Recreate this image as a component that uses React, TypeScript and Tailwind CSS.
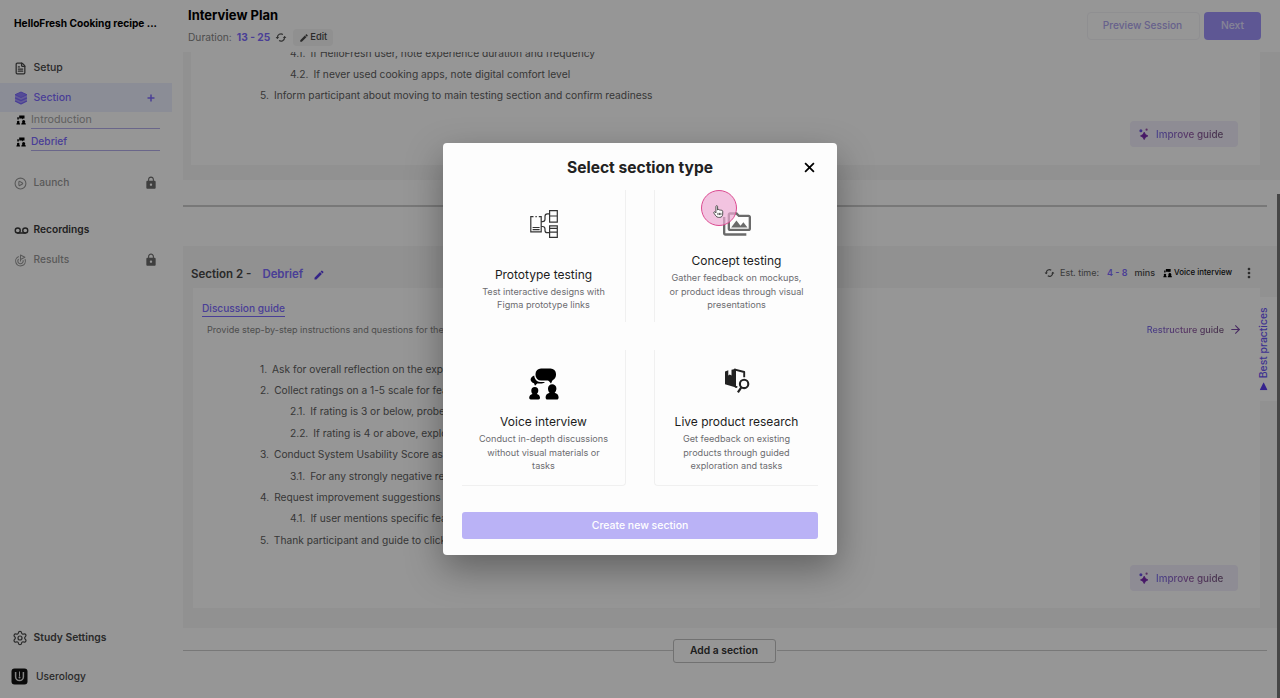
import type { ReactNode } from "react";
import { CirclePlay, FileText, Goal, Settings, Voicemail, ArrowRight } from "lucide-react";
import { MdEdit, MdLock, MdMoreVert, MdOutlinePermMedia } from "react-icons/md";

function TalkIcon({ className }: { className?: string }) {
  return (
    <svg viewBox="0 0 30 32" className={className} fill="currentColor">
      <rect x="6.5" y="0.5" width="20.5" height="12" rx="5.5" />
      <path d="M18 11h6l-2 4.6z" />
      <path d="M5.200 7.400C3 8.200 1.600 9.900 1.600 11.600c0 1.900 1.500 3.200 3.400 3.600l1 2.600 2.200-2.300h4.500c1.500 0 2.600-.6 3.300-1.400h-3.400c-4.200 0-7-2.600-7.400-6.700z" />
      <path d="M2.300 22.600a3.500 3.500 0 0 1 7 0c0 1.500-.6 2.600-1.500 3.300 1.900.5 3.200 1.900 3.200 3.700 0 1.200-.5 1.900-1.500 1.900H1.700c-1 0-1.500-.7-1.500-1.900 0-1.800 1.400-3.200 3.300-3.700-.8-.7-1.200-1.800-1.200-3.300z" />
      <path d="M19 20.400a4.200 4.200 0 0 1 8.400 0c0 1.900-.7 3.500-1.800 4.300 2.400.6 4 2.200 4 4.500 0 1.500-.6 2.300-1.900 2.300h-9.200c-1.300 0-1.900-.8-1.900-2.300 0-2.300 1.700-3.900 4-4.500-1-.8-1.600-2.400-1.600-4.300z" />
    </svg>
  );
}

function TalkIconSmall({ className }: { className?: string }) {
  return (
    <svg viewBox="0 0 10 10" className={className} fill="#000">
      <path d="M3.200.6h5.300v3H7.200l-.5.900-.6-.9H3.200zM1.300 2.200h1.500v2.300H1.300z" />
      <circle cx="2.200" cy="7" r="1.300" />
      <path d="M.4 9.600c0-1.500.8-2 1.800-2s1.800.5 1.800 2z" />
      <circle cx="7.600" cy="6.400" r="1.500" />
      <path d="M5.300 9.600c0-1.800 1-2.300 2.300-2.300s2.200.5 2.200 2.300z" />
    </svg>
  );
}

function RefreshIcon({ className }: { className?: string }) {
  return (
    <svg viewBox="0 0 12 11" className={className} fill="none" stroke="#555" strokeWidth="1.200">
      <path d="M2.400 6.500V5.400a3.600 3.600 0 0 1 5.500-3M9.600 4.500v1.100a3.600 3.600 0 0 1-5.500 3" />
      <path d="M.6 5 2.400 7l1.800-2zM7.800 6 9.600 4l1.800 2z" fill="#555" stroke="none" />
    </svg>
  );
}

function LayersIcon() {
  return (
    <svg viewBox="0 0 14 14" className="h-[14px] w-[14px]" fill="#8f80ff" stroke="#7d6bff" strokeWidth="1" strokeLinejoin="round">
      <path d="M7 .9 12.900 3.400v7L7 13.100 1.100 10.400v-7z" stroke="none" fill="#a99dff" />
      <path d="M7 1 12.900 3.700 7 6.500 1.100 3.700z" />
      <path d="M1.100 6.800 7 9.600l5.900-2.800M1.100 10 7 12.900l5.900-2.900" fill="none" strokeWidth="1.300" />
    </svg>
  );
}

function PrototypeIcon() {
  return (
    <svg viewBox="0 0 28 28" className="h-7 w-7" fill="none" stroke="#333" strokeWidth="1.200">
      <path d="M3.500 6.600H.8v15.200h10.400V6.600H8.800M5.400 6.600h1.400M2.600 17.500h7M2.600 19.600h7" />
      <path d="M11.200 11.600h1.300c1.600 0 2.500-.8 2.500-2.400V6.300c0-1.500.8-2.400 2.400-2.400h2M11.200 16.500h1.300c1.600 0 2.500.8 2.500 2.400v1.500c0 1.500.8 2.300 2.400 2.300h2" />
      <path d="M19.600.7h7.700v11.500h-7.700zM19.600 6h7.700M19.600 15.800h7.700v11.500h-7.700zM19.600 18.400h7.700M19.600 22.200h7.700" />
    </svg>
  );
}

function ProductIcon() {
  return (
    <svg viewBox="0 0 26 26" className="h-[26px] w-[26px]" fill="none">
      <path d="M1 3.600 4.300 2.300v5.200l1.500-1 1.700 1V1.800L12 .8v18.700L1 16.200z" fill="#222" />
      <path d="M10 1.300 20.200 4v5.200M11 18.600l2.300.6" stroke="#222" strokeWidth="1.900" strokeLinejoin="round" />
      <circle cx="20.100" cy="15.900" r="4.200" stroke="#222" strokeWidth="2.100" />
      <path d="m17.300 19.300-3.400 5" stroke="#222" strokeWidth="2.200" />
    </svg>
  );
}

function SparkIcon() {
  return (
    <svg viewBox="0 0 12 12" className="h-3 w-3">
      <path d="M6.200 4.200 7.500 6.600 9.900 7.900 7.500 9.200 6.200 11.600 4.900 9.200 2.500 7.900 4.900 6.600z" fill="#7a2ab0" stroke="#7a2ab0" strokeWidth=".8" strokeLinejoin="round" />
      <circle cx="2.900" cy="2.800" r="1.500" fill="#6a50e8" />
      <circle cx="8.600" cy="1.700" r="1.100" fill="#9a50a8" />
    </svg>
  );
}

function NavRow({ icon, label, className, locked }: { icon: ReactNode; label: string; className: string; locked?: boolean }) {
  return (
    <div className={`flex h-[30px] shrink-0 items-center pr-[14px] pl-[14px] ${className}`}>
      <span className="flex w-[19.500px] items-center">{icon}</span>
      <span>{label}</span>
      {locked && <MdLock className="ml-auto h-[14px] w-[14px] text-[#6c6c6c]" />}
    </div>
  );
}

function SubItem({ label, className }: { label: string; className: string }) {
  return (
    <div className="flex h-[22px] items-start pr-3 pl-4">
      <TalkIconSmall className="mt-[3px] h-[10px] w-[10px]" />
      <span className={`ml-[5px] h-[17px] flex-1 border-b border-[#b5aeea] leading-[15px] ${className}`}>{label}</span>
    </div>
  );
}

function ImproveButton() {
  return (
    <button className="flex h-[26px] w-[108px] items-center gap-[6px] rounded-sm bg-[#f1eefb] pl-[8px] text-[9.900px] font-medium">
      <SparkIcon />
      <span className="bg-gradient-to-r from-[#7c70f0] via-[#955aa8] to-[#75567f] bg-clip-text text-transparent">Improve guide</span>
    </button>
  );
}

const guide = [
  { n: "1.", t: "Ask for overall reflection on the experience" },
  { n: "2.", t: "Collect ratings on a 1-5 scale for features" },
  { n: "2.1.", t: "If rating is 3 or below, probe for reasons", sub: true },
  { n: "2.2.", t: "If rating is 4 or above, explore what worked", sub: true },
  { n: "3.", t: "Conduct System Usability Score assessment" },
  { n: "3.1.", t: "For any strongly negative response", sub: true },
  { n: "4.", t: "Request improvement suggestions" },
  { n: "4.1.", t: "If user mentions specific feature", sub: true },
  { n: "5.", t: "Thank participant and guide to click" },
];

function GuideLine({ n, t, sub }: { n: string; t: string; sub?: boolean }) {
  return (
    <div className={`flex h-[21.400px] shrink-0 items-center gap-[5px] whitespace-nowrap ${sub ? "pl-[30px]" : ""}`}>
      <span>{n}</span>
      <span>{t}</span>
    </div>
  );
}

function TypeCard({ icon, iconBox, title, lines, className }: { icon: ReactNode; iconBox: string; title: string; lines: string[]; className: string }) {
  return (
    <div className={`flex flex-col items-center border-[#f0f0f0] text-center ${className}`}>
      <div className={`flex items-center justify-center ${iconBox}`}>{icon}</div>
      <div className="text-[12px] leading-[18px] text-[#1c1c1c]">{title}</div>
      <div className="mt-[1px] text-[9.120px] leading-[13.700px] text-[#6c6c70]">
        {lines.map((l) => (
          <div key={l} className="whitespace-nowrap">{l}</div>
        ))}
      </div>
    </div>
  );
}

export default function App() {
  return (
    <div className="relative flex h-[698px] w-[1280px] overflow-hidden bg-white font-['Inter',sans-serif] text-[10.200px] text-[#484848]">
      <aside className="flex w-[172px] shrink-0 flex-col">
        <div className="mt-[14px] h-[18px] pl-[14px] text-[10.160px] leading-[19px] font-bold whitespace-nowrap text-black">HelloFresh Cooking recipe ...</div>
        <div className="h-[21px]" />
        <NavRow icon={<FileText size={13} strokeWidth={2.300} />} label="Setup" className="text-[10.500px] font-medium" />
        <div className="flex h-[29px] shrink-0 items-center bg-[#edf0ff] pr-[17px] pl-[14px] text-[10.500px] font-medium text-[#7d6bff]">
          <span className="w-[19.500px]"><LayersIcon /></span>
          <span>Section</span>
          <svg viewBox="0 0 8 8" className="ml-auto h-2 w-2" stroke="currentColor" strokeWidth="1.500"><path d="M4 .5v7M.5 4h7" /></svg>
        </div>
        <SubItem label="Introduction" className="text-[10.700px] text-[#a3a3a3]" />
        <SubItem label="Debrief" className="text-[10.200px] font-medium text-[#7d6bff]" />
        <div className="h-3" />
        <NavRow icon={<CirclePlay size={13} />} label="Launch" className="font-medium text-[#989898]" locked />
        <div className="h-[17px]" />
        <NavRow icon={<Voicemail size={15} strokeWidth={2.200} />} label="Recordings" className="font-semibold text-[#383838]" />
        <NavRow icon={<Goal size={13} />} label="Results" className="font-medium text-[#989898]" locked />
        <div className="mt-auto">
          <NavRow icon={<Settings size={16} strokeWidth={1.800} className="-ml-[2px]" />} label="Study Settings" className="text-[10.350px] font-semibold" />
          <div className="mt-2 mb-[6px] flex h-[31px] items-center pl-[11px] font-medium">
            <svg viewBox="0 0 17 17" className="mr-2 h-[17px] w-[17px]">
              <rect x=".5" y=".5" width="16" height="16" rx="3" fill="#111" />
              <path d="M4.600 4v4.700a3.900 3.900 0 0 0 7.800 0V4" fill="none" stroke="#ddd" strokeWidth="1.500" />
              <path d="M8.500 3.500v5" stroke="#ddd" strokeWidth="1" />
              <circle cx="8.500" cy="9.500" r="1" fill="#ddd" />
            </svg>
            Userology
          </div>
        </div>
      </aside>

      <div className="flex min-w-0 flex-1 flex-col pl-[11px]">
        <header className="flex h-[52px] shrink-0 justify-between pr-[19px] pl-[5px]">
          <div>
            <div className="mt-[6px] text-[12.970px] leading-[18px] font-bold text-black">Interview Plan</div>
            <div className="mt-[4px] flex h-[19px] items-center">
              <span className="text-[10.200px] text-[#858585]">Duration:</span>
              <span className="ml-[5px] font-bold text-[#7d6bff]">13 - 25</span>
              <RefreshIcon className="ml-[5px] h-[11px] w-3" />
              <span className="ml-[6px] flex h-[17px] items-center gap-[1px] rounded-sm bg-[#f5f5f5] px-[6px] text-[9.400px] font-medium"><MdEdit className="h-[10px] w-[10px]" />Edit</span>
            </div>
          </div>
          <div className="mt-3 flex h-7 gap-1">
            <button className="w-[113px] rounded border border-[#f4f3f7] pr-[2px] text-[10.140px] font-medium text-[#b0a6ee]">Preview Session</button>
            <button className="w-[57px] rounded bg-[#a195fb] text-[10.280px] font-medium text-[#e4e0ff]">Next</button>
          </div>
        </header>

        <main className="flex min-h-0 flex-1 flex-col overflow-hidden">
          <section className="h-[128px] shrink-0 bg-[#f6f6f6] pr-[20px] pb-[15px] pl-2">
            <div className="flex h-[113px] flex-col overflow-hidden bg-white pr-[22px] pl-[69px] text-[10.260px] text-[#606060]">
              <div className="-mt-[9.500px]" />
              <GuideLine n="4.1." t="If HelloFresh user, note experience duration and frequency" sub />
              <GuideLine n="4.2." t="If never used cooking apps, note digital comfort level" sub />
              <GuideLine n="5." t="Inform participant about moving to main testing section and confirm readiness" />
              <div className="mt-[14.500px] self-end"><ImproveButton /></div>
            </div>
          </section>

          <div className="mt-[25px] mr-[13px] h-[1.500px] shrink-0 bg-[#cccccc]" />

          <section className="mt-[39px] h-[382px] shrink-0 bg-[#f6f6f6] pr-[20px] pl-[10px]">
            <div className="flex h-[42px] items-center pt-[16px]">
              <span className="-ml-[2px] text-[11.500px] font-semibold">Section 2 -</span>
              <span className="ml-[11px] text-[11.400px] font-semibold text-[#7d6bff]">Debrief</span>
              <MdEdit className="ml-[10px] h-3 w-3 text-[#5b3fe8]" />
              <div className="-mt-[4px] mr-[3px] ml-auto flex items-center text-[9px]">
                <RefreshIcon className="h-[10px] w-[11px]" />
                <span className="ml-[5px] text-[#666]">Est. time:</span>
                <span className="ml-2 font-semibold text-[#7d6bff]">4 - 8</span>
                <span className="ml-[7px] font-medium">mins</span>
                <TalkIconSmall className="ml-2 h-[10px] w-[9px]" />
                <span className="ml-[2px] text-[7.900px] font-medium text-[#111]">Voice interview</span>
                <MdMoreVert className="ml-[9px] h-4 w-4" />
              </div>
            </div>
            <div className="flex h-[320px] flex-col bg-white pr-[22px] pl-[9px]">
              <div className="mt-[12px] h-[17px] self-start border-b-[1.500px] border-[#7d6bff] text-[10.160px] leading-[16px] font-medium text-[#7d6bff]">Discussion guide</div>
              <div className="mt-[4px] flex h-[19px] items-center justify-between pl-[5px] text-[9.080px] text-[#858585]">
                <span>Provide step-by-step instructions and questions for the AI moderator</span>
                <span className="mr-[-4px] flex items-center gap-[5px] font-medium">
                  <span className="bg-gradient-to-r from-[#7c70f0] via-[#955aa8] to-[#75567f] bg-clip-text text-transparent">Restructure guide</span>
                  <ArrowRight size={13} className="text-[#7b4aa8]" />
                </span>
              </div>
              <div className="mt-[19px] pl-[58px] text-[#606060]">
                {guide.map((g) => (
                  <GuideLine key={g.n} {...g} />
                ))}
              </div>
              <div className="mt-[14px] self-end"><ImproveButton /></div>
            </div>
          </section>

          <div className="mt-[11px] mr-[13px] flex shrink-0 items-center">
            <span className="h-[1.500px] flex-1 bg-[#cccccc]" />
            <button className="mr-[1px] -ml-[1px] h-6 w-[103px] rounded-[3px] border-[1.500px] border-[#c0c0c0] pt-[1px] text-[10.310px] font-semibold text-[#333]">Add a section</button>
            <span className="h-[1.500px] flex-1 bg-[#cccccc]" />
          </div>
        </main>
      </div>

      <div className="absolute top-[297px] right-[3px] flex h-[104px] w-[21px] items-center justify-center bg-white">
        <div className="flex -translate-x-[3px] -rotate-90 items-center gap-1 text-[10.390px] font-medium whitespace-nowrap text-[#6a55f5]">
          <svg viewBox="0 0 8 8" className="h-2 w-2"><path d="M0 0v8l8-4z" fill="#5a3df0" /></svg>
          Best practices
        </div>
      </div>
      <div className="absolute top-[194px] right-0 h-[504px] w-[3px] bg-[#777]" />

      <div className="absolute inset-0 flex items-start justify-center bg-black/41 pt-[143px]">
        <div className="relative flex h-[412px] w-[394px] flex-col rounded-[4px] bg-[#fdfdfd] px-[19px] shadow-[0_14px_36px_rgba(0,0,0,0.35)]">
          <div className="flex h-[47px] items-center justify-center text-[15.570px] font-bold text-[#222]">
            <h2 className="pt-[2px]">Select section type</h2>
            <button className="absolute top-[19px] right-[22px]">
              <svg viewBox="0 0 10 10" className="h-[11px] w-[11px]" stroke="#000" strokeWidth="1.600"><path d="m1 1 8 8M9 1 1 9" /></svg>
            </button>
          </div>
          <div className="grid grid-cols-[164px_164px] grid-rows-[132px_136px] justify-between gap-y-[28px]">
            <TypeCard className="border-r" icon={<PrototypeIcon />} iconBox="h-[68px] mb-[7.500px]" title="Prototype testing" lines={["Test interactive designs with", "Figma prototype links"]} />
            <TypeCard className="border-l" icon={<MdOutlinePermMedia className="h-[28px] w-[28px] text-[#6a6a6a]" />} iconBox="h-[62px] pt-[5px]" title="Concept testing" lines={["Gather feedback on mockups,", "or product ideas through visual", "presentations"]} />
            <TypeCard className="rounded-br-sm border-r border-b" icon={<TalkIcon className="h-8 w-[30px] text-black" />} iconBox="h-[63px] pt-[4px]" title="Voice interview" lines={["Conduct in-depth discussions", "without visual materials or", "tasks"]} />
            <TypeCard className="rounded-bl-sm border-b border-l" icon={<ProductIcon />} iconBox="h-[63px] pb-[2px]" title="Live product research" lines={["Get feedback on existing", "products through guided", "exploration and tasks"]} />
          </div>
          <button className="mt-[26px] h-[27px] shrink-0 rounded-[3px] bg-[#bab2f6] text-[10.470px] font-medium text-white">Create new section</button>
          <div className="absolute top-[47px] left-[257.500px] flex h-9 w-9 items-center justify-center rounded-full border-[1.500px] border-[#dc4b91] bg-[#eda9d3]/70">
            <svg viewBox="0 0 12 14" className="mt-[6px] -ml-px h-[13px] w-[11px]" fill="#fff" stroke="#444" strokeWidth="1" strokeLinejoin="round">
              <path d="M3.200 8.500V1.600c0-1.300 1.800-1.300 1.800 0v3.800l.2-.3c.4-.6 1.500-.4 1.700.4.500-.6 1.600-.4 1.700.4.700-.6 2-.1 2 .9v3c0 2-1.200 3.600-3.200 3.600H6c-1.400 0-2.200-.6-2.900-1.600L1 8.800c-.7-1.100.6-2 1.400-1.200z" />
              <path d="M5.400 8.500v2.400M7 8.500v2.400M8.600 8.500v2.400" fill="none" />
            </svg>
          </div>
        </div>
      </div>
    </div>
  );
}
